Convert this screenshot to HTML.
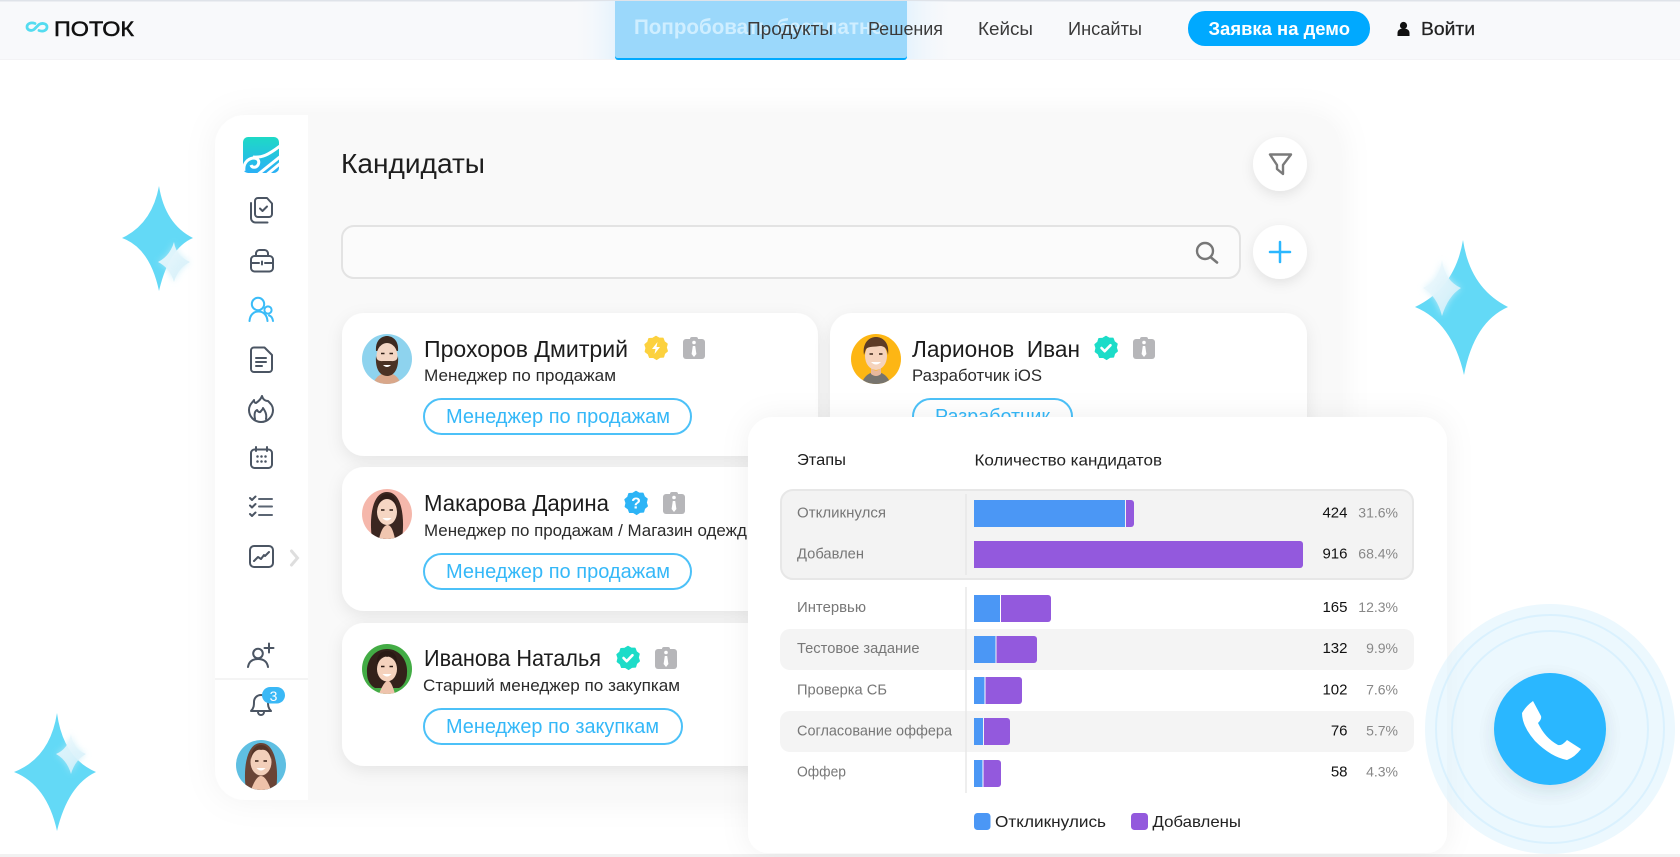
<!DOCTYPE html>
<html lang="ru"><head><meta charset="utf-8"><title>Поток</title>
<style>
html,body{margin:0;padding:0;background:#fff;width:1680px;height:857px;overflow:hidden}
svg{display:block;position:absolute;left:0;top:0;filter:blur(.3px)}
text{font-family:"Liberation Sans","DejaVu Sans",sans-serif}
.nm{font-size:23.500px;fill:#1c1c1c}
.rl{font-size:17px;fill:#2b2b2b}
.pl{font-size:20px;fill:#35b8f8}
.pb{fill:#fff;stroke:#4cc1f8;stroke-width:2}
.lb{font-size:15px;fill:#777}
.nu{font-size:15px;fill:#111;text-anchor:end}
.pc{font-size:14px;fill:#888;text-anchor:end}
.ic{fill:none;stroke:#4b5563;stroke-width:2;stroke-linecap:round;stroke-linejoin:round}
.nv{font-size:18px;fill:#3a3a3a}
</style></head><body>
<svg width="1680" height="857" viewBox="0 0 1680 857" xmlns="http://www.w3.org/2000/svg">
<defs>
<filter id="sh" x="-10%" y="-15%" width="120%" height="130%"><feDropShadow dx="0" dy="0" stdDeviation="16" flood-color="#000" flood-opacity=".05"/></filter>
<filter id="cs" x="-15%" y="-25%" width="130%" height="150%"><feDropShadow dx="0" dy="5" stdDeviation="8" flood-color="#000" flood-opacity=".08"/></filter>
<filter id="bs" x="-40%" y="-40%" width="180%" height="180%"><feDropShadow dx="0" dy="4" stdDeviation="6" flood-color="#000" flood-opacity=".09"/></filter>
<filter id="ps" x="-10%" y="-10%" width="120%" height="120%"><feDropShadow dx="0" dy="0" stdDeviation="14" flood-color="#000" flood-opacity=".06"/></filter>
<filter id="gl" x="-60%" y="-60%" width="220%" height="220%"><feGaussianBlur stdDeviation="3.5"/></filter>
<filter id="cb" x="-20%" y="-20%" width="140%" height="140%"><feDropShadow dx="0" dy="6" stdDeviation="9" flood-color="#345" flood-opacity=".14"/></filter>
<linearGradient id="lg" x1="0" y1="0" x2="0" y2="1"><stop offset="0" stop-color="#1ed9c6"/><stop offset="1" stop-color="#2ab0f6"/></linearGradient>
<linearGradient id="nl" x1="0" x2="1"><stop offset="0" stop-color="#f8f9fb" stop-opacity="0"/><stop offset="1" stop-color="#e6f3fd"/></linearGradient>
<linearGradient id="nr" x1="0" x2="1"><stop offset="0" stop-color="#e6f3fd"/><stop offset="1" stop-color="#f8f9fb" stop-opacity="0"/></linearGradient>
<linearGradient id="ss" x1="0" y1="0" x2="1" y2="1"><stop offset="0" stop-color="#f4fafd"/><stop offset="1" stop-color="#cfeef9"/></linearGradient>
<clipPath id="av"><circle cx="0" cy="0" r="25"/></clipPath>
<clipPath id="lc"><rect x="243" y="137" width="36" height="36" rx="4"/></clipPath>
<path id="st" d="M0-11.5 3.2-9.6 6.9-9.6 8.2-6.2 11-4 10.1-.4 11.2 3 8.4 5.4 7.4 8.9 3.8 9.1 .6 11.3-2.6 9.2-6.3 9.3-7.6 5.9-10.6 3.6-9.8 0-10.9-3.4-8.1-5.8-7-9.3-3.3-9.5Z" stroke-linejoin="round" stroke-width="1.5"/>
<g id="tag"><rect x="0" y="2" width="22" height="20" rx="3" fill="#b6b6b9"/><rect x="7" y="0" width="8" height="5" rx="2" fill="#b6b6b9"/><circle cx="11" cy="5.500" r="1.800" fill="#fff"/><path d="M9.800 9h2.400l1.200 8-2.400 3-2.400-3Z" fill="#fff"/></g>
<g id="ck"><use href="#st" fill="#1cdcc8" stroke="#1cdcc8"/><path d="M-4.500 0-1.300 3.200 4.500-2.800" fill="none" stroke="#fff" stroke-width="2.600" stroke-linecap="round" stroke-linejoin="round"/></g>
</defs>

<!-- stars -->
<path d="M159 186Q165 224 193 238Q169 248 159 291Q150 248 122 238Q152 224 159 186Z" fill="#63d9f6"/>
<path d="M174 242Q176 256 190 262Q178 268 174 282Q170 268 158 262Q170 256 174 242Z" fill="#bdeaf7" filter="url(#gl)" opacity=".7"/>
<path d="M174 242Q176 256 190 262Q178 268 174 282Q170 268 158 262Q170 256 174 242Z" fill="url(#ss)" opacity=".9"/>
<path d="M57 713Q63 758 96 772Q68 785 57 831Q47 785 14 772Q50 758 57 713Z" fill="#63d9f6"/>
<path d="M71 734Q73 749 86 754Q75 760 71 774Q67 760 56 754Q68 749 71 734Z" fill="#bdeaf7" filter="url(#gl)" opacity=".7"/>
<path d="M71 734Q73 749 86 754Q75 760 71 774Q67 760 56 754Q68 749 71 734Z" fill="url(#ss)" opacity=".85"/>
<path d="M1463 240Q1470 288 1508 307Q1474 322 1464 375Q1452 322 1415 307Q1455 288 1463 240Z" fill="#63d9f6"/>
<path d="M1442 260Q1445 281 1461 288Q1448 296 1442 316Q1437 296 1423 288Q1439 281 1442 260Z" fill="#cdeffa" filter="url(#gl)" opacity=".8"/>
<path d="M1442 260Q1445 281 1461 288Q1448 296 1442 316Q1437 296 1423 288Q1439 281 1442 260Z" fill="url(#ss)" opacity=".9"/>

<!-- main panel -->
<rect x="215" y="115" width="1125" height="685" rx="30" fill="#f9f9f9" filter="url(#sh)"/>
<path d="M308 115H245a30 30 0 0 0-30 30V770a30 30 0 0 0 30 30H308Z" fill="#fff"/>
<line x1="215" y1="679" x2="308" y2="679" stroke="#f0f0f0" stroke-width="1.500"/>

<!-- sidebar logo -->
<rect x="243" y="137" width="36" height="36" rx="5" fill="url(#lg)"/>
<g clip-path="url(#lc)" fill="none" stroke="#fff" stroke-width="3"><path d="M244 171c-1-7 3-12 9-13 5 0 7 3 5 7-2 3-6 3-7 0"/><path d="M256 176 281 156"/><path d="M265 176 282 162"/><path d="M274 176 283 169"/><path d="M253 157c9 1 15-2 27-11"/></g>

<!-- sidebar icons -->
<g class="ic">
<path d="M258 198H267l5 5.500V214a3 3 0 0 1-3 3h-11a3 3 0 0 1-3-3V201a3 3 0 0 1 3-3Z"/><path d="M251 203v15a4.500 4.500 0 0 0 4.500 4.500h12"/><path d="M260 208.500l2.500 2.500 4.500-4.500"/>
<rect x="251" y="256" width="22" height="15.500" rx="3.500"/><path d="M256 256v-2.500a3.500 3.500 0 0 1 3.500-3.500h5a3.500 3.500 0 0 1 3.500 3.500V256"/><path d="M251 263h8M265 263h8M262 261.500v3"/>
<path d="M254 347.500h10.500l7.500 7.500v14a3 3 0 0 1-3 3h-15a3 3 0 0 1-3-3v-18.500a3 3 0 0 1 3-3Z"/><path d="M256 358h10M256 362h10M256 366h6"/>
<path d="M262 396c1 4 4 5 6 5 3 3 5 5 5 9a12 12 0 0 1-24 0c0-5 3-7 5-10 0 2 1 3 2 3 3-2 5-4 6-7Z"/><path d="M255 419c-1-5 0-8 2-9 1 2 3 3 4 1 1-1 2-2 2-3 2 3 4 6 3 11"/>
<rect x="251" y="449.500" width="21" height="18.500" rx="3.500"/><path d="M256 447v4M267 447v4"/>
<path d="M257.500 456.500h.01M261.500 456.500h.01M265.500 456.500h.01M257.500 461.500h.01M261.500 461.500h.01M265.500 461.500h.01" stroke-width="2.500"/>
<path d="M259 499h13M259 506.500h13M259 515h13" stroke="#5b6573"/><path d="M250 498l2 2 3.500-3.500M250 505.500l2 2 3.500-3.500M250 514l2 2 3.500-3.500"/>
<rect x="250" y="546" width="23" height="21" rx="4"/><path d="M254 561l4-4 3 2 3-4 1 1 4-4"/>
<path d="M248 667c1-6 5-8 10-8s9 2 10 8"/><circle cx="258" cy="653.500" r="4.800"/><path d="M264.500 648h9M269 643.500v9"/>
<path d="M251 711c3-3 3-6 3-9 0-4 3-7 7-7s7 3 7 7c0 3 0 6 3 9Zm7 1c0 4 6 4 6 0"/>
</g>
<circle cx="258" cy="304" r="6.200" fill="none" stroke="#3bbcf8" stroke-width="2"/><path d="M249.500 321c.5-6 4-9.500 9-9.500s8.500 3.500 9 9.500" fill="none" stroke="#3bbcf8" stroke-width="2" stroke-linecap="round"/><circle cx="268" cy="310" r="3.600" fill="none" stroke="#3bbcf8" stroke-width="2"/><path d="M269 315.500c2.500 .5 3.500 2.500 4 5.500" fill="none" stroke="#3bbcf8" stroke-width="2" stroke-linecap="round"/>
<path d="M291.500 551l6 7-6 7" fill="none" stroke="#dedede" stroke-width="3" stroke-linecap="round"/>
<rect x="262" y="687" width="23" height="16.500" rx="8.250" fill="#3ab8f6"/><text x="273.500" y="701" font-size="14" fill="#fff" text-anchor="middle">3</text>

<!-- sidebar avatar -->
<g transform="translate(261 765)" clip-path="url(#av)"><rect x="-25" y="-25" width="50" height="50" fill="#5fbfe2"/><path d="M-15 25C-18 5-15-22 0-22S18 5 15 25Z" fill="#6a4436"/><ellipse cx="0" cy="-3" rx="10.500" ry="13.500" fill="#f2cfba"/><path d="M-10-6C-8-14-3-16 0-15 4-16 8-14 10-6 10-16 5-20 0-20S-10-16-10-6Z" fill="#553427"/><path d="M-6-4h3.500M2.500-4H6" stroke="#3a2218" stroke-width="1.600"/><path d="M-4.500 3Q0 8 4.500 3Z" fill="#fff"/><path d="M-10 25Q-5 11 0 11T10 25Z" fill="#eec2aa"/></g>

<!-- header area -->
<text x="341" y="173" font-size="27.500" fill="#1e1e1e" textLength="144" lengthAdjust="spacingAndGlyphs">Кандидаты</text>
<circle cx="1280" cy="164" r="27" fill="#fff" filter="url(#bs)"/>
<path d="M1270 154.500H1291L1283 165V174L1277 169V165Z" fill="none" stroke="#7a7a7a" stroke-width="2.400" stroke-linejoin="round"/>
<rect x="342" y="226" width="898" height="52" rx="12" fill="#fbfbfb" stroke="#e3e3e3" stroke-width="2"/>
<circle cx="1205" cy="251" r="8" fill="none" stroke="#777" stroke-width="2.400"/><path d="M1211 257.500l6 5" stroke="#777" stroke-width="2.600" stroke-linecap="round"/>
<circle cx="1280" cy="252" r="27" fill="#fff" filter="url(#bs)"/>
<path d="M1270 252h20M1280 242v20" stroke="#2ab7ff" stroke-width="2.500" stroke-linecap="round"/>

<!-- candidate cards left -->
<rect x="342" y="313" width="476" height="143" rx="22" fill="#fff" filter="url(#cs)"/>
<rect x="342" y="467" width="476" height="144" rx="22" fill="#fff" filter="url(#cs)"/>
<rect x="342" y="623" width="476" height="143" rx="22" fill="#fff" filter="url(#cs)"/>

<g transform="translate(387 359)" clip-path="url(#av)"><rect x="-25" y="-25" width="50" height="50" fill="#8ed3ee"/><path d="M-14 25Q-10 14 0 14T14 25Z" fill="#d9a78a"/><path d="M-11-8C-12-20-4-23 0-23S12-20 11-8Z" fill="#3d2a20"/><ellipse cx="0" cy="-3" rx="10.500" ry="13" fill="#f3d6c4"/><path d="M-6-5.500h3.500M2.500-5.500H6" stroke="#2e1e16" stroke-width="1.600"/><path d="M-11-3C-12 10-7 17 0 17S12 10 11-3C10 3 6 2 3 2H-3C-6 2-10 3-11-3Z" fill="#4a3224"/><path d="M-4 6Q0 10 4 6Z" fill="#fff"/></g>
<text class="nm" x="424" y="357" textLength="204" lengthAdjust="spacingAndGlyphs">Прохоров Дмитрий</text>
<g transform="translate(656 348)"><use href="#st" fill="#fcd13e" stroke="#fcd13e"/><path d="M1.500-6-4 1H-.5L-1.500 6 4-1H.5Z" fill="#fff"/></g>
<use href="#tag" x="683" y="337"/>
<text class="rl" x="424" y="381" textLength="192" lengthAdjust="spacingAndGlyphs">Менеджер по продажам</text>
<rect class="pb" x="424" y="399" width="267" height="35" rx="17.500"/>
<text class="pl" x="446" y="423" textLength="224" lengthAdjust="spacingAndGlyphs">Менеджер по продажам</text>

<g transform="translate(387 514)" clip-path="url(#av)"><rect x="-25" y="-25" width="50" height="50" fill="#f5b7ab"/><path d="M-15 25C-18 4-15-22 0-22S18 4 15 25Z" fill="#3b2620"/><ellipse cx="0" cy="-2" rx="10" ry="13" fill="#f6d6c3"/><path d="M-10-3C-9-13-4-16 0-15 4-16 9-13 10-3 10-16 5-20 0-20S-10-16-10-3Z" fill="#2f1d18"/><path d="M-6-4h3.500M2.500-4H6" stroke="#2a1812" stroke-width="1.600"/><path d="M-4.500 4Q0 9 4.500 4Z" fill="#fff"/><path d="M-8 25Q-5 12 0 11T8 25Z" fill="#f0c6b0"/></g>
<text class="nm" x="424" y="511" textLength="185" lengthAdjust="spacingAndGlyphs">Макарова Дарина</text>
<g transform="translate(636 503)"><use href="#st" fill="#2db4f6" stroke="#2db4f6"/><text x="0" y="5.500" font-size="16" font-weight="bold" fill="#fff" text-anchor="middle">?</text></g>
<use href="#tag" x="663" y="492"/>
<text class="rl" x="424" y="536" textLength="335" lengthAdjust="spacingAndGlyphs">Менеджер по продажам / Магазин одежды</text>
<rect class="pb" x="424" y="554" width="267" height="35" rx="17.500"/>
<text class="pl" x="446" y="578" textLength="224" lengthAdjust="spacingAndGlyphs">Менеджер по продажам</text>

<g transform="translate(387 669)" clip-path="url(#av)"><rect x="-25" y="-25" width="50" height="50" fill="#43ac45"/><path d="M-20 4C-21-8-13-20 0-20S21-8 20 4C20 12 16 17 12 19H-12C-16 17-20 12-20 4Z" fill="#33211a"/><ellipse cx="0" cy="0" rx="10" ry="12.500" fill="#f5d2bd"/><path d="M-10-4C-8-13-3-14 0-12 4-14 8-13 10-4 11-15 5-18 0-18S-11-15-10-4Z" fill="#2a1a14"/><path d="M-6-2.500h3.500M2.500-2.500H6" stroke="#2a1812" stroke-width="1.600"/><path d="M-4.500 5Q0 10 4.500 5Z" fill="#fff"/><path d="M-8 25Q-4 14 0 12T8 25Z" fill="#eec3ac"/></g>
<text class="nm" x="424" y="666" textLength="177" lengthAdjust="spacingAndGlyphs">Иванова Наталья</text>
<use href="#ck" x="628" y="658"/>
<use href="#tag" x="655" y="647"/>
<text class="rl" x="423" y="691" textLength="257" lengthAdjust="spacingAndGlyphs">Старший менеджер по закупкам</text>
<rect class="pb" x="424" y="709" width="258" height="35" rx="17.500"/>
<text class="pl" x="446" y="733" textLength="213" lengthAdjust="spacingAndGlyphs">Менеджер по закупкам</text>

<!-- candidate card right -->
<rect x="830" y="313" width="477" height="143" rx="22" fill="#fff" filter="url(#cs)"/>
<g transform="translate(876 359)" clip-path="url(#av)"><rect x="-25" y="-25" width="50" height="50" fill="#fdb614"/><path d="M-15 25Q-10 13 0 13T15 25Z" fill="#77746e"/><path d="M-5 9Q0 14 5 9V15Q0 19-5 15Z" fill="#e8b89c"/><ellipse cx="0" cy="-3" rx="11" ry="14" fill="#f5d3bc"/><path d="M-12-4C-14-17-6-22 0-22S14-17 12-4C11-10 9-13 4-13-1-12-7-13-10-10Z" fill="#5e3c26"/><path d="M-6.500-5h3.500M3-5h3.500" stroke="#3a2416" stroke-width="1.600"/><path d="M-5 3Q0 8 5 3Z" fill="#fff"/></g>
<text class="nm" x="912" y="357" textLength="168" lengthAdjust="spacingAndGlyphs" xml:space="preserve">Ларионов  Иван</text>
<use href="#ck" x="1106" y="348"/>
<use href="#tag" x="1133" y="337"/>
<text class="rl" x="912" y="381" textLength="130" lengthAdjust="spacingAndGlyphs">Разработчик iOS</text>
<rect class="pb" x="913" y="399" width="159" height="35" rx="17.500"/>
<text class="pl" x="935" y="423" textLength="115" lengthAdjust="spacingAndGlyphs">Разработчик</text>

<!-- bottom strip -->
<rect x="0" y="854" width="1680" height="3" fill="#f1f1f1"/>

<!-- chart panel -->
<path d="M773 417H1422a25 25 0 0 1 25 25V833a20 20 0 0 1-20 20H768a20 20 0 0 1-20-20V442a25 25 0 0 1 25-25Z" fill="#fff" filter="url(#ps)"/>
<text x="797" y="465" font-size="15.500" fill="#1d1d1d" textLength="49" lengthAdjust="spacingAndGlyphs">Этапы</text>
<text x="974.500" y="465.500" font-size="16" fill="#222" textLength="187.500" lengthAdjust="spacingAndGlyphs">Количество кандидатов</text>

<rect x="781" y="490" width="632" height="89" rx="12" fill="#f3f3f3" stroke="#e7e7e7" stroke-width="2"/>
<rect x="780" y="629" width="634" height="41" rx="10" fill="#f4f4f4"/>
<rect x="780" y="711" width="634" height="41" rx="10" fill="#f4f4f4"/>
<path d="M966 494V575M966 587V793" stroke="#e8e8e8" stroke-width="1.500"/>

<g fill="#4b97f5">
<rect x="974" y="500" width="151" height="27"/>
<rect x="974" y="595" width="26" height="27"/>
<rect x="974" y="636" width="21.500" height="27"/>
<rect x="974" y="677" width="10.500" height="27"/>
<rect x="974" y="718" width="9" height="27"/>
<rect x="974" y="760" width="8.500" height="27"/>
<rect x="974" y="813" width="16.500" height="17" rx="3.500"/>
</g>
<g fill="#9359dd">
<path d="M1126 500h5a3 3 0 0 1 3 3v21a3 3 0 0 1-3 3h-5Z"/>
<path d="M974 541h326a3 3 0 0 1 3 3v21a3 3 0 0 1-3 3H974Z"/>
<path d="M1001 595h47a3 3 0 0 1 3 3v21a3 3 0 0 1-3 3h-47Z"/>
<path d="M996.500 636h37.500a3 3 0 0 1 3 3v21a3 3 0 0 1-3 3h-37.500Z"/>
<path d="M985.500 677h33.500a3 3 0 0 1 3 3v21a3 3 0 0 1-3 3h-33.500Z"/>
<path d="M984 718h23a3 3 0 0 1 3 3v21a3 3 0 0 1-3 3h-23Z"/>
<path d="M983.500 760h14.500a3 3 0 0 1 3 3v21a3 3 0 0 1-3 3h-14.500Z"/>
<rect x="1131" y="813" width="17" height="17" rx="3.500"/>
</g>

<text class="lb" x="797" y="517.500" textLength="89" lengthAdjust="spacingAndGlyphs">Откликнулся</text>
<text class="lb" x="797" y="558.500" textLength="67" lengthAdjust="spacingAndGlyphs">Добавлен</text>
<text class="lb" x="797" y="612" textLength="69" lengthAdjust="spacingAndGlyphs">Интервью</text>
<text class="lb" x="797" y="653" textLength="122.500" lengthAdjust="spacingAndGlyphs">Тестовое задание</text>
<text class="lb" x="797" y="694.500" textLength="90" lengthAdjust="spacingAndGlyphs">Проверка СБ</text>
<text class="lb" x="797" y="735.500" textLength="155" lengthAdjust="spacingAndGlyphs">Согласование оффера</text>
<text class="lb" x="797" y="776.500" textLength="49" lengthAdjust="spacingAndGlyphs">Оффер</text>

<text class="nu" x="1347.500" y="517.500">424</text><text class="pc" x="1398" y="517.500">31.6%</text>
<text class="nu" x="1347.500" y="558.500">916</text><text class="pc" x="1398" y="558.500">68.4%</text>
<text class="nu" x="1347.500" y="612">165</text><text class="pc" x="1398" y="612">12.3%</text>
<text class="nu" x="1347.500" y="653">132</text><text class="pc" x="1398" y="653">9.9%</text>
<text class="nu" x="1347.500" y="694.500">102</text><text class="pc" x="1398" y="694.500">7.6%</text>
<text class="nu" x="1347.500" y="735.500">76</text><text class="pc" x="1398" y="735.500">5.7%</text>
<text class="nu" x="1347.500" y="776.500">58</text><text class="pc" x="1398" y="776.500">4.3%</text>

<text x="995" y="827" font-size="16" fill="#222" textLength="111" lengthAdjust="spacingAndGlyphs">Откликнулись</text>
<text x="1152.500" y="827" font-size="16" fill="#222" textLength="88.500" lengthAdjust="spacingAndGlyphs">Добавлены</text>

<!-- call widget -->
<circle cx="1550" cy="729" r="125" fill="#d9f1fd" fill-opacity=".5"/>
<circle cx="1550" cy="729" r="114" fill="none" stroke="#d4effd" stroke-width="2" opacity=".75"/>
<circle cx="1550" cy="729" r="98" fill="none" stroke="#d4effd" stroke-width="2" opacity=".75"/>
<circle cx="1550" cy="729" r="56" fill="#2ab7ff" filter="url(#cb)"/>
<path d="M1533 701L1541 716Q1542 719 1538 723Q1545 738 1558 745Q1562 746 1567 740L1581 749Q1575 757 1567 760Q1551 757 1535 741Q1522 726 1522 713Q1526 706 1533 701Z" fill="#fff"/>

<!-- nav -->
<rect x="0" y="0" width="1680" height="59" fill="#f8f9fb"/>
<rect x="0" y="0" width="1680" height="1.500" fill="#dfe3e9"/>
<rect x="0" y="59" width="1680" height="1" fill="#f3f3f5"/>
<rect x="570" y="1" width="45" height="58" fill="url(#nl)"/>
<rect x="907" y="1" width="50" height="58" fill="url(#nr)"/>
<path d="M615 1H907V57a3 3 0 0 1-3 3H618a3 3 0 0 1-3-3Z" fill="#00aaff"/>
<path d="M615 1H907V56a3 3 0 0 1-3 2H618a3 3 0 0 1-3-2Z" fill="#9bd8fb"/>
<text x="634" y="34" font-size="21" font-weight="bold" fill="#cfeeff" textLength="250" lengthAdjust="spacingAndGlyphs">Попробовать бесплатно</text>

<path d="M35 23.500c-4-1.500-8 0-8 3.500 0 3 4 4.500 7 2.500l5-5c3-2 8-1 8 2.500 0 3.500-4 5-8 3.500" fill="none" stroke="#54dcf0" stroke-width="2.800" stroke-linecap="round"/>
<text x="54" y="36" font-size="21.500" fill="#111" stroke="#111" stroke-width=".5" textLength="80" lengthAdjust="spacingAndGlyphs">ПОТОК</text>

<text class="nv" x="747" y="35" textLength="86" lengthAdjust="spacingAndGlyphs">Продукты</text>
<text class="nv" x="868" y="35" textLength="75" lengthAdjust="spacingAndGlyphs">Решения</text>
<text class="nv" x="978" y="35" textLength="55" lengthAdjust="spacingAndGlyphs">Кейсы</text>
<text class="nv" x="1068" y="35" textLength="74" lengthAdjust="spacingAndGlyphs">Инсайты</text>
<rect x="1188" y="11" width="182" height="35" rx="17" fill="#00a9ff"/>
<text x="1208.500" y="35" font-size="18" font-weight="bold" fill="#fff" textLength="141.500" lengthAdjust="spacingAndGlyphs">Заявка на демо</text>
<circle cx="1403.500" cy="25.500" r="3.600" fill="#111"/><path d="M1397.500 36v-3c0-3 2.500-4.500 6-4.500s6 1.500 6 4.500v3Z" fill="#111"/>
<text x="1421" y="35" font-size="18" fill="#222" stroke="#222" stroke-width=".25" textLength="54" lengthAdjust="spacingAndGlyphs">Войти</text>
</svg>
</body></html>
